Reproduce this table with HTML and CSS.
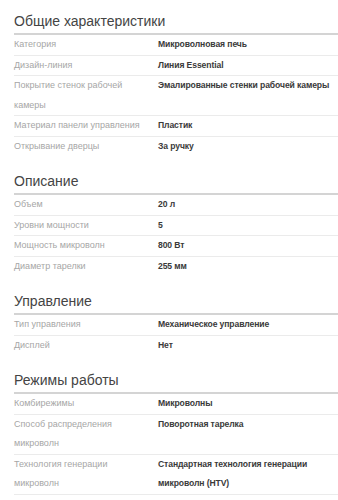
FILE: index.html
```html
<!DOCTYPE html>
<html lang="ru">
<head>
<meta charset="utf-8">
<link rel="stylesheet" href="styles.css">
</head>
<body>
<div class="spec">
  <section class="group">
    <h2 class="group-title">Общие характеристики</h2>
    <div class="row"><div class="label">Категория</div><div class="value">Микроволновая печь</div></div>
    <div class="row"><div class="label">Дизайн-линия</div><div class="value">Линия Essential</div></div>
    <div class="row"><div class="label">Покрытие стенок рабочей камеры</div><div class="value">Эмалированные стенки рабочей камеры</div></div>
    <div class="row"><div class="label">Материал панели управления</div><div class="value">Пластик</div></div>
    <div class="row"><div class="label">Открывание дверцы</div><div class="value">За ручку</div></div>
  </section>
  <section class="group">
    <h2 class="group-title">Описание</h2>
    <div class="row"><div class="label">Объем</div><div class="value">20 л</div></div>
    <div class="row"><div class="label">Уровни мощности</div><div class="value">5</div></div>
    <div class="row"><div class="label">Мощность микроволн</div><div class="value">800 Вт</div></div>
    <div class="row"><div class="label">Диаметр тарелки</div><div class="value">255 мм</div></div>
  </section>
  <section class="group">
    <h2 class="group-title">Управление</h2>
    <div class="row"><div class="label">Тип управления</div><div class="value">Механическое управление</div></div>
    <div class="row"><div class="label">Дисплей</div><div class="value">Нет</div></div>
  </section>
  <section class="group group--open">
    <h2 class="group-title">Режимы работы</h2>
    <div class="row"><div class="label">Комбирежимы</div><div class="value">Микроволны</div></div>
    <div class="row"><div class="label">Способ распределения микроволн</div><div class="value">Поворотная тарелка</div></div>
    <div class="row"><div class="label">Технология генерации микроволн</div><div class="value">Стандартная технология генерации микроволн (HTV)</div></div>
  </section>
</div>
</body>
</html>
```

FILE: styles.css
```css
html, body {
  margin: 0;
  padding: 0;
  background: #ffffff;
}

html {
  overflow: hidden;
}

body {
  font-family: "Liberation Sans", Arial, sans-serif;
}

.spec {
  padding: 9px 0 0 14px;
  width: 340px;
}

.group + .group {
  margin-top: 12px;
}

.group-title {
  margin: 0;
  font-size: 14px;
  font-weight: normal;
  line-height: 24px;
  color: #444444;
  border-bottom: 2px solid #d4d4d4;
}

.row {
  display: grid;
  grid-template-columns: 144px 1fr;
  font-size: 9px;
  line-height: 19.5px;
  border-bottom: 1px solid #ebebeb;
}

.group .row:last-child {
  border-bottom-color: transparent;
}

.group--open .row:last-child {
  border-bottom-color: #ebebeb;
}

.label {
  padding-right: 18px;
  color: #a6a6a6;
}

.value {
  color: #3a3a3a;
  font-weight: bold;
  font-size: 8.6px;
  letter-spacing: -0.1px;
}
```
